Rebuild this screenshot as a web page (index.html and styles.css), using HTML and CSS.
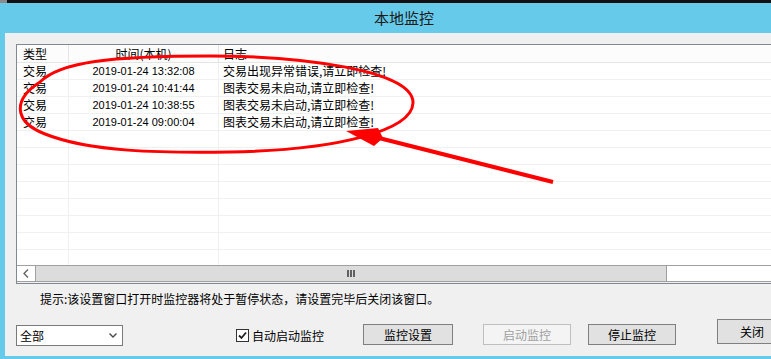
FILE: index.html
```html
<!DOCTYPE html>
<html lang="zh-CN">

<head>
  <meta charset="UTF-8" />
  <title>本地监控</title>
  <link rel="stylesheet" href="styles.css">
</head>

<body>
  <div class="topstrip"><span class="corner"></span></div>
  <div class="titlebar">本地监控</div>

  <div class="window">
    <div class="listview">
      <div class="lv-head">
        <div class="c-type">类型</div>
        <div class="c-time">时间(本机)</div>
        <div class="c-log">日志</div>
      </div>
      <div class="lv-body" id="rows"></div>
      <div class="lv-row filler">
        <div class="c-type"></div>
        <div class="c-time"></div>
        <div class="c-log"></div>
      </div>
      <div class="hscroll">
        <div class="sb-arrow">
          <svg width="6" height="9" viewBox="0 0 6 9"><path d="M5 0.5 L1 4.5 L5 8.5" fill="none" stroke="#606060" stroke-width="1.3"/></svg>
        </div>
        <div class="sb-thumb"><span class="grip"></span></div>
        <div class="sb-track"></div>
      </div>
      <div class="lv-gap"></div>
    </div>

    <p class="hint">提示:该设置窗口打开时监控器将处于暂停状态，请设置完毕后关闭该窗口。</p>

    <div class="controls">
      <div class="select">
        <span>全部</span>
        <svg width="8" height="5" viewBox="0 0 8 5"><path d="M0.5 0.5 L4 4 L7.5 0.5" fill="none" stroke="#444" stroke-width="1.3"/></svg>
      </div>
      <label class="autostart">
        <span class="checkbox">
          <svg width="11" height="11" viewBox="0 0 11 11"><path d="M2 5.5 L4.5 8 L9 2.5" fill="none" stroke="#222" stroke-width="1.8"/></svg>
        </span>
        自动启动监控
      </label>
      <button class="btn">监控设置</button>
      <button class="btn disabled">启动监控</button>
      <button class="btn stop">停止监控</button>
      <button class="btn close">关闭</button>
    </div>
  </div>

  <svg class="annot" width="771" height="359" viewBox="0 0 771 359">
    <path d="M413 103 C414 70, 300 56, 210 56 C110 56, 60 62, 40 82 C12 100, 14 122, 45 134 C90 152, 160 153, 230 152 C340 150, 412 130, 413 103 Z" fill="none" stroke="#ff0000" stroke-width="3"/>
    <path d="M553 182 L375 137" stroke="#ff0000" stroke-width="4"/>
    <polygon points="346,131 378,128 383,138 374,146" fill="#ff0000"/>
  </svg>

  <script>
    const logs = [
      { tipo: "交易", hora: "2019-01-24 13:32:08", msg: "交易出现异常错误,请立即检查!" },
      { tipo: "交易", hora: "2019-01-24 10:41:44", msg: "图表交易未启动,请立即检查!" },
      { tipo: "交易", hora: "2019-01-24 10:38:55", msg: "图表交易未启动,请立即检查!" },
      { tipo: "交易", hora: "2019-01-24 09:00:04", msg: "图表交易未启动,请立即检查!" },
    ];

    const rows = document.getElementById("rows");
    for (let i = 0; i < 11; i++) {
      const item = logs[i] || { tipo: "", hora: "", msg: "" };
      const div = document.createElement("div");
      div.classList.add("lv-row");
      div.innerHTML = `
        <div class="c-type">${item.tipo}</div>
        <div class="c-time">${item.hora}</div>
        <div class="c-log">${item.msg}</div>
      `;
      rows.appendChild(div);
    }
  </script>
</body>

</html>
```

FILE: styles.css
```css
body {
  margin: 0;
  width: 771px;
  height: 359px;
  overflow: hidden;
  background-color: #66cbea;
  font-family: "Noto Sans CJK SC", sans-serif;
  font-size: 12px;
  color: #000;
}

.topstrip {
  height: 3px;
  background-color: #111;
}

.corner {
  display: block;
  width: 7px;
  height: 3px;
  background-color: #8a8a8a;
}

.titlebar {
  height: 30px;
  line-height: 29px;
  padding-left: 37px;
  text-align: center;
  font-size: 15px;
  color: #1a1a1a;
}

.window {
  margin-left: 5px;
  width: 766px;
  height: 323px;
  box-sizing: border-box;
  padding: 11px 0 0 11px;
  background-color: #f0f0f0;
  overflow: hidden;
}

.listview {
  width: 770px;
  height: 240px;
  box-sizing: border-box;
  border: 1px solid #828790;
  border-right: none;
  background-color: #fff;
  display: flex;
  flex-direction: column;
}

.lv-head,
.lv-row {
  display: flex;
  box-sizing: border-box;
}

.lv-head {
  height: 18px;
  line-height: 17px;
  background-color: #fcfcfc;
  border-bottom: 1px solid #e5e5e5;
}

.lv-row {
  height: 17px;
  line-height: 16px;
  border-bottom: 1px solid #f0f0f0;
}

.lv-row.filler {
  height: 15px;
  border-bottom: none;
}

.c-type {
  width: 52px;
  flex-shrink: 0;
  box-sizing: border-box;
  padding-left: 6px;
  border-right: 1px solid #f0f0f0;
}

.c-time {
  width: 150px;
  flex-shrink: 0;
  box-sizing: border-box;
  text-align: center;
  border-right: 1px solid #f0f0f0;
}

.lv-row .c-time {
  font-family: "Liberation Sans", Arial, sans-serif;
  font-size: 11px;
}

.lv-head .c-type,
.lv-head .c-time {
  border-right-color: #e5e5e5;
}

.c-log {
  flex: 1;
  padding-left: 4px;
  white-space: nowrap;
}

.hscroll {
  height: 17px;
  box-sizing: border-box;
  display: flex;
  border-top: 1px solid #a0a0a0;
  border-bottom: 1px solid #a0a0a0;
}

.sb-arrow {
  width: 18px;
  display: flex;
  align-items: center;
  justify-content: center;
  background-color: #fff;
}

.sb-thumb {
  width: 632px;
  box-sizing: border-box;
  background-color: #dcdcdc;
  border-left: 1px solid #a0a0a0;
  border-right: 1px solid #a0a0a0;
  display: flex;
  align-items: center;
  justify-content: center;
}

.grip {
  width: 8px;
  height: 7px;
  background: linear-gradient(to right, #606060 0 2px, transparent 2px 3px, #606060 3px 5px, transparent 5px 6px, #606060 6px 8px);
}

.sb-track {
  flex: 1;
  background-color: #fff;
}

.lv-gap {
  height: 1px;
  background-color: #f0f0f0;
}

.hint {
  margin: 8px 0 0;
  padding-left: 24px;
  height: 14px;
  line-height: 14px;
  white-space: nowrap;
}

.controls {
  display: flex;
  align-items: flex-start;
  margin-top: 13px;
}

.controls > * {
  flex-shrink: 0;
}

.select {
  width: 107px;
  height: 21px;
  margin-top: 6px;
  box-sizing: border-box;
  border: 1px solid #7a7a7a;
  background-color: #fff;
  display: flex;
  align-items: center;
  justify-content: space-between;
  padding: 0 5px 0 3px;
}

.autostart {
  width: 127px;
  margin-left: 113px;
  margin-top: 6px;
  height: 21px;
  display: flex;
  align-items: center;
  gap: 3px;
  white-space: nowrap;
}

.checkbox {
  width: 13px;
  height: 13px;
  box-sizing: border-box;
  border: 1px solid #333;
  background-color: #fff;
  display: flex;
  align-items: center;
  justify-content: center;
}

.btn {
  width: 88px;
  height: 21px;
  margin-top: 5px;
  padding: 0;
  box-sizing: border-box;
  border: 1px solid #7f7f7f;
  background-color: #e1e1e1;
  font-family: "Noto Sans CJK SC", sans-serif;
  font-size: 12px;
  color: #000;
  line-height: 18px;
}

.btn:first-of-type {
  width: 90px;
}

.btn.disabled {
  margin-left: 30px;
  background-color: #f4f4f4;
  border-color: #bfbfbf;
  color: #a0a0a0;
}

.btn.stop {
  margin-left: 17px;
}

.btn.close {
  margin-left: 41px;
  margin-top: 0;
  width: 70px;
  height: 25px;
  line-height: 20px;
}

.annot {
  position: absolute;
  left: 0;
  top: 0;
  pointer-events: none;
}
```
